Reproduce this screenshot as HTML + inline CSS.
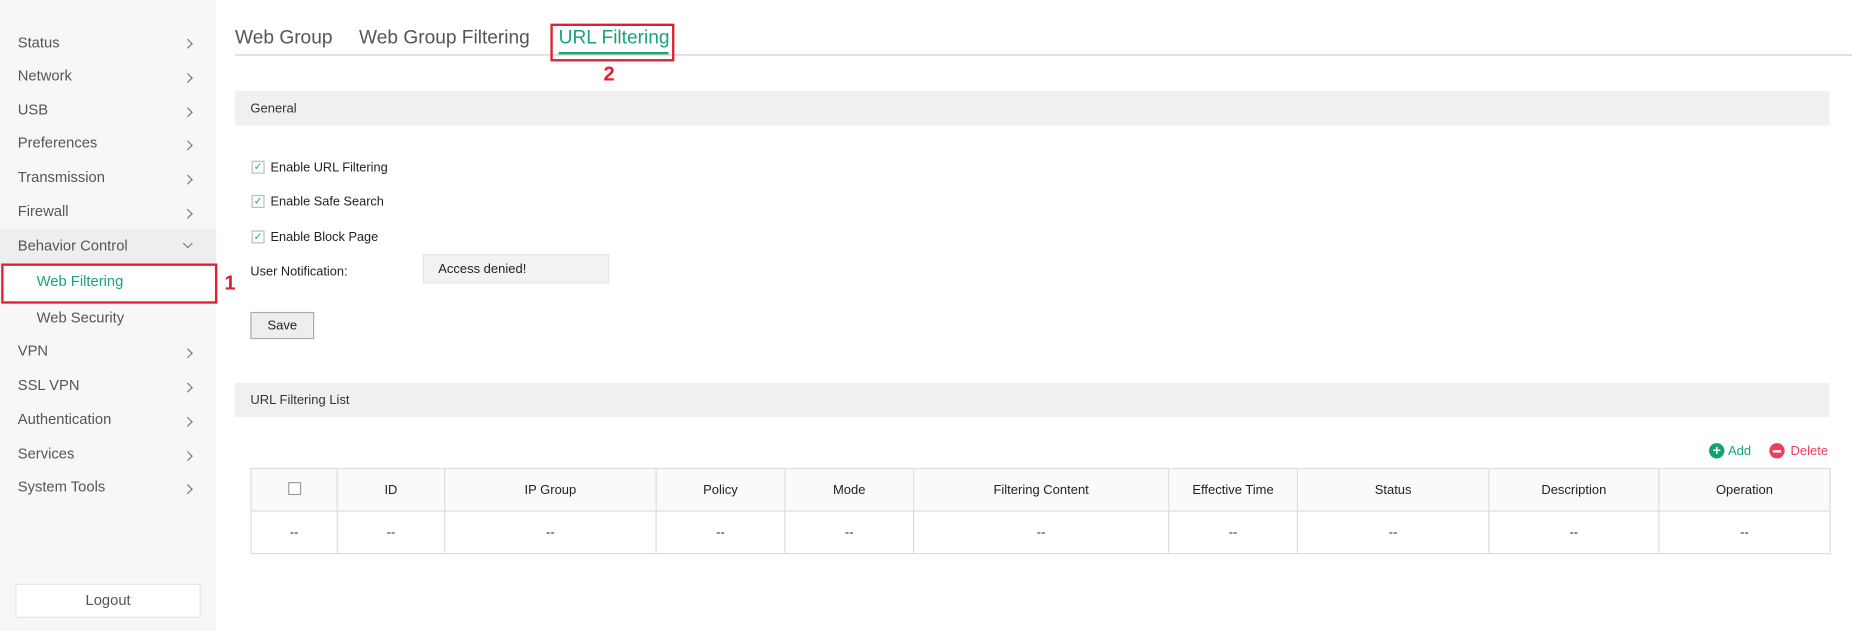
<!DOCTYPE html>
<html><head><meta charset="utf-8"><style>
html,body{margin:0;padding:0;width:1852px;height:631px;overflow:hidden;background:#fff;}
#w{position:absolute;left:0;top:0;width:1568px;height:534px;transform:scale(1.1811,1.1816);transform-origin:0 0;font-family:"Liberation Sans",sans-serif;color:#333;}
.a{position:absolute;white-space:nowrap;}
#side{position:absolute;left:0;top:0;width:183px;height:534px;background:#f7f7f7;}
.mi{position:absolute;left:15px;font-size:12.5px;color:#555;line-height:16px;}
.ch{position:absolute;left:156px;width:5px;height:5px;border-right:1px solid #777;border-top:1px solid #777;transform:rotate(45deg);}
.hd{position:absolute;left:199px;width:1350px;height:29px;background:#f0f0f0;font-size:11px;line-height:30px;color:#333;}
.cb{position:absolute;left:213px;width:9px;height:9px;border:1px solid #bbb;background:#fff;font-size:9px;line-height:9px;color:#1aa37a;text-align:center;}
.lb{position:absolute;left:229px;font-size:10.8px;line-height:12px;color:#222;}
table{position:absolute;left:212px;top:396px;width:1338px;border-collapse:collapse;font-size:11px;color:#222;}
td{border:1px solid #ddd;text-align:center;padding:0;}
tr.h td{height:35px;background:#fafafa;}
tr.r td{height:35px;}
.tb{font-size:16.2px;top:23px;}
</style></head><body><div id="w">
<div id="side">
<div class="a" style="left:0;top:194px;width:183px;height:29px;background:#eee"></div>
<div class="a" style="left:1px;top:223px;width:179px;height:30px;background:#fff;border:2px solid #e02030"></div>
<div class="mi" style="top:28px">Status</div><div class="ch" style="top:34px"></div>
<div class="mi" style="top:56px">Network</div><div class="ch" style="top:63px"></div>
<div class="mi" style="top:85px">USB</div><div class="ch" style="top:92px"></div>
<div class="mi" style="top:113px">Preferences</div><div class="ch" style="top:120px"></div>
<div class="mi" style="top:142px">Transmission</div><div class="ch" style="top:149px"></div>
<div class="mi" style="top:171px">Firewall</div><div class="ch" style="top:178px"></div>
<div class="mi" style="top:200px">Behavior Control</div><div class="ch" style="top:203px;transform:rotate(135deg)"></div>
<div class="mi" style="top:230px;left:31px;color:#1aa37a">Web Filtering</div>
<div class="mi" style="top:261px;left:31px">Web Security</div>
<div class="mi" style="top:289px">VPN</div><div class="ch" style="top:296px"></div>
<div class="mi" style="top:318px">SSL VPN</div><div class="ch" style="top:325px"></div>
<div class="mi" style="top:347px">Authentication</div><div class="ch" style="top:354px"></div>
<div class="mi" style="top:376px">Services</div><div class="ch" style="top:383px"></div>
<div class="mi" style="top:404px">System Tools</div><div class="ch" style="top:411px"></div>
<div class="a" style="left:13px;top:494px;width:155px;height:27px;background:#fff;border:1px solid #e5e5e5;font-size:12.5px;line-height:27px;text-align:center;color:#555">Logout</div>
</div>
<div class="a" style="left:190px;top:230px;font-size:17px;font-weight:bold;color:#e02030">1</div>
<div class="a tb" style="left:199px;color:#555">Web Group</div>
<div class="a tb" style="left:304px;color:#555">Web Group Filtering</div>
<div class="a tb" style="left:473px;color:#1aa37a">URL Filtering</div>
<div class="a" style="left:199px;top:46px;width:1369px;height:1px;background:#ccc"></div>
<div class="a" style="left:473px;top:44px;width:93px;height:2px;background:#1aa37a"></div>
<div class="a" style="left:466px;top:20px;width:101px;height:28px;border:2px solid #e02030"></div>
<div class="a" style="left:511px;top:53px;font-size:17px;font-weight:bold;color:#e02030">2</div>
<div class="hd" style="top:77px"><span style="margin-left:13px">General</span></div>
<div class="cb" style="top:136px">✓</div><div class="lb" style="top:136px">Enable URL Filtering</div>
<div class="cb" style="top:165px">✓</div><div class="lb" style="top:165px">Enable Safe Search</div>
<div class="cb" style="top:195px">✓</div><div class="lb" style="top:195px">Enable Block Page</div>
<div class="a" style="left:212px;top:224px;font-size:10.8px;color:#222">User Notification:</div>
<div class="a" style="left:358px;top:215px;width:144px;height:23px;padding-left:12px;background:#f2f2f2;border:1px solid #e5e5e5;font-size:11px;line-height:24px;color:#222">Access denied!</div>
<div class="a" style="left:212px;top:264px;width:52px;height:21px;background:#eee;border:1px solid #aaa;font-size:11px;line-height:22px;text-align:center;color:#222">Save</div>
<div class="hd" style="top:324px"><span style="margin-left:13px">URL Filtering List</span></div>
<div class="a" style="left:1447px;top:375px;width:13px;height:13px;border-radius:50%;background:#0ea470;color:#fff;font-size:12px;line-height:13px;text-align:center;font-weight:bold">+</div>
<div class="a" style="left:1463px;top:376px;font-size:11px;color:#1aa37a">Add</div>
<div class="a" style="left:1498px;top:375px;width:13px;height:13px;border-radius:50%;background:#ef3d5e"><div style="position:absolute;left:3px;top:6px;width:7px;height:2px;background:#fff"></div></div>
<div class="a" style="left:1516px;top:376px;font-size:11px;color:#ef3d5e">Delete</div>
<table>
<tr class="h"><td style="width:72px"><span style="display:inline-block;width:9px;height:9px;border:1px solid #999;background:#fff"></span></td><td style="width:90px">ID</td><td style="width:178px">IP Group</td><td style="width:108px">Policy</td><td style="width:108px">Mode</td><td style="width:215px">Filtering Content</td><td style="width:108px">Effective Time</td><td style="width:161px">Status</td><td style="width:143px">Description</td><td>Operation</td></tr>
<tr class="r"><td>--</td><td>--</td><td>--</td><td>--</td><td>--</td><td>--</td><td>--</td><td>--</td><td>--</td><td>--</td></tr>
</table>
</div></body></html>
